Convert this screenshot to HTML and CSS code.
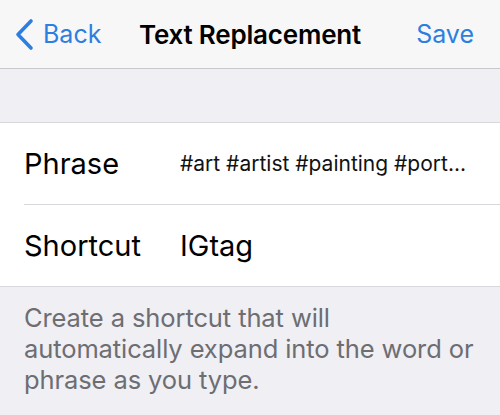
FILE: index.html
```html
<!DOCTYPE html>
<html lang="en">
<head>
    <meta charset="UTF-8">
    <meta name="viewport" content="width=device-width, initial-scale=1.0">
    <title>Text Replacement</title>
    <link rel="stylesheet" href="styles.css">
</head>
<body>

    <!-- Barra de navegación -->
    <div class="nav-bar">
        <div class="nav-back">
            <svg class="chevron" width="20" height="33" viewBox="0 0 20 33">
                <path d="M17 3 L4 16.5 L17 30" fill="none" stroke="#2c7fe0" stroke-width="3.6" stroke-linecap="round" stroke-linejoin="round"/>
            </svg>
            <span>Back</span>
        </div>
        <div class="nav-title">Text Replacement</div>
        <div class="nav-save">Save</div>
    </div>

    <div class="spacer"></div>

    <!-- Formulario -->
    <div class="form-group">
        <div class="form-row">
            <div class="row-label">Phrase</div>
            <div class="row-value phrase">#art #artist #painting #port...</div>
        </div>
        <div class="form-row">
            <div class="row-label">Shortcut</div>
            <div class="row-value">IGtag</div>
        </div>
    </div>

    <div class="footer-note">
        Create a shortcut that will<br>
        automatically expand into the word or<br>
        phrase as you type.
    </div>

</body>
</html>
```

FILE: styles.css
```css
body {
    margin: 0;
    padding: 0;
    font-family: Inter, "Noto Sans", sans-serif;
    background: #efeff4;
    width: 500px;
    height: 415px;
    overflow: hidden;
}
/* Barra superior */
.nav-bar {
    height: 68px;
    background-color: #f7f7f8;
    border-bottom: 1px solid #c8c7cc;
    display: grid;
    grid-template-columns: 1fr auto 1fr;
    align-items: center;
    padding: 0 26px;
}
.nav-back {
    display: flex;
    align-items: center;
    color: #2c7fe0;
    font-size: 25px;
    gap: 9px;
    margin-left: -12px;
}
.chevron {
    display: block;
}
.nav-title {
    font-size: 26px;
    font-weight: 600;
    color: #000;
    letter-spacing: -0.2px;
}
.nav-save {
    color: #2c7fe0;
    font-size: 25px;
    text-align: right;
}
.spacer {
    height: 53px;
}
/* Grupo de filas */
.form-group {
    background-color: #fff;
    border-top: 1px solid #d8d8dc;
    border-bottom: 1px solid #d8d8dc;
    padding-left: 24px;
}
.form-row {
    display: flex;
    align-items: center;
    height: 81px;
}
.form-row + .form-row {
    border-top: 1px solid #d8d8dc;
}
.row-label {
    width: 156px;
    font-size: 29px;
    color: #000;
}
.row-value {
    font-size: 29px;
    color: #000;
}
.row-value.phrase {
    font-size: 21px;
    color: #111;
}
/* Texto inferior */
.footer-note {
    padding: 15px 0 0 24px;
    font-size: 25.5px;
    line-height: 31px;
    letter-spacing: -0.1px;
    white-space: nowrap;
    color: #6d6d72;
}
```
